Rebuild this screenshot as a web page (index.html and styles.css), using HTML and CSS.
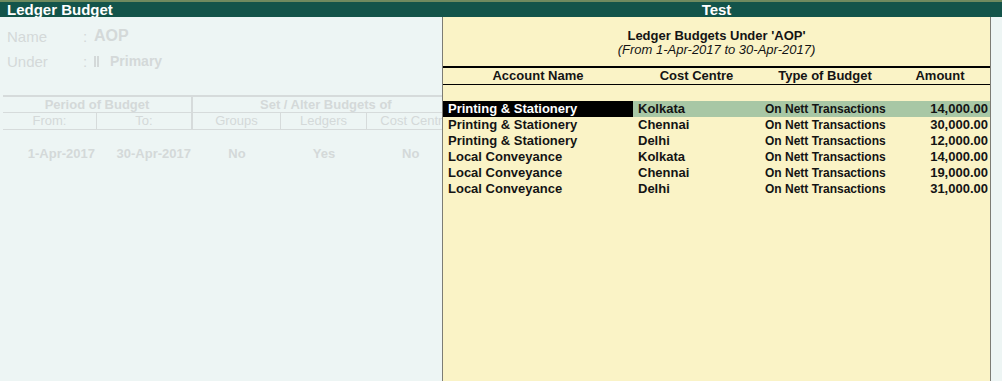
FILE: index.html
```html
<!DOCTYPE html>
<html>
<head>
<meta charset="utf-8">
<link rel="stylesheet" href="styles.css">
</head>
<body>
<div class="app">
  <div class="topstrip"></div>
  <div class="main">
    <section class="left">
      <div class="bar"><span class="bar-title">Ledger Budget</span></div>
      <div class="left-body">
        <div class="field">
          <span class="lbl">Name</span><span class="colon">:</span><span class="val big">AOP</span>
        </div>
        <div class="field second">
          <span class="lbl">Under</span><span class="colon">:</span><span class="marker"></span><span class="val">Primary</span>
        </div>
        <div class="ptable">
          <div class="cell h1 span2 thick-r">Period of Budget</div>
          <div class="cell h1 span3 shift">Set / Alter Budgets of</div>
          <div class="cell h2 thin-r">From:</div>
          <div class="cell h2 thick-r">To:</div>
          <div class="cell h2 thin-r">Groups</div>
          <div class="cell h2 thin-r">Ledgers</div>
          <div class="cell h2">Cost Centre</div>
        </div>
        <div class="pdata">
          <div class="d date">1-Apr-2017</div>
          <div class="d date">30-Apr-2017</div>
          <div class="d">No</div>
          <div class="d">Yes</div>
          <div class="d">No</div>
        </div>
      </div>
    </section>
    <section class="right">
      <div class="bar bar-center"><span class="bar-title">Test</span></div>
      <div class="right-wrap">
        <div class="report">
          <div class="r-title">Ledger Budgets Under 'AOP'</div>
          <div class="r-sub">(From 1-Apr-2017 to 30-Apr-2017)</div>
          <div class="r-thick"></div>
          <div class="r-row r-head">
            <div class="c">Account Name</div>
            <div class="c">Cost Centre</div>
            <div class="c">Type of Budget</div>
            <div class="c">Amount</div>
          </div>
          <div class="r-rows">
            <div class="r-row sel">
              <div class="acc">Printing &amp; Stationery</div>
              <div class="cc">Kolkata</div>
              <div class="tp">On Nett Transactions</div>
              <div class="amt">14,000.00</div>
            </div>
            <div class="r-row">
              <div class="acc">Printing &amp; Stationery</div>
              <div class="cc">Chennai</div>
              <div class="tp">On Nett Transactions</div>
              <div class="amt">30,000.00</div>
            </div>
            <div class="r-row">
              <div class="acc">Printing &amp; Stationery</div>
              <div class="cc">Delhi</div>
              <div class="tp">On Nett Transactions</div>
              <div class="amt">12,000.00</div>
            </div>
            <div class="r-row">
              <div class="acc">Local Conveyance</div>
              <div class="cc">Kolkata</div>
              <div class="tp">On Nett Transactions</div>
              <div class="amt">14,000.00</div>
            </div>
            <div class="r-row">
              <div class="acc">Local Conveyance</div>
              <div class="cc">Chennai</div>
              <div class="tp">On Nett Transactions</div>
              <div class="amt">19,000.00</div>
            </div>
            <div class="r-row">
              <div class="acc">Local Conveyance</div>
              <div class="cc">Delhi</div>
              <div class="tp">On Nett Transactions</div>
              <div class="amt">31,000.00</div>
            </div>
          </div>
        </div>
        <div class="edge"></div>
      </div>
    </section>
  </div>
</div>
</body>
</html>
```

FILE: styles.css
```css
* { box-sizing: border-box; }
html, body { margin: 0; padding: 0; }
body {
  width: 1002px;
  height: 381px;
  overflow: hidden;
  background: #edf5f4;
  font-family: "Liberation Sans", Arial, sans-serif;
}
.app { width: 1002px; height: 381px; display: flex; flex-direction: column; }
.topstrip {
  height: 2px;
  background: repeating-linear-gradient(to right, #6f8a5f 0 144px, #cddbc0 144px 145px);
  background-size: 144px 2px;
  background-position: 0 0;
}
.main { flex: 1; display: flex; min-height: 0; }
.bar {
  height: 15px;
  background: #13544a;
  color: #ffffff;
  font-weight: bold;
  font-size: 15px;
  line-height: 15px;
  padding-left: 7px;
  white-space: nowrap;
}
.bar-center { text-align: center; padding-left: 0; padding-right: 11px; }

/* LEFT */
.left { width: 442px; overflow: hidden; display: flex; flex-direction: column; }
.left-body { flex: 1; background: #edf5f4; padding-top: 9px; color: #d4d9d9; }
.field { display: flex; align-items: center; height: 20px; padding-left: 7px; white-space: nowrap; }
.field.second { margin-top: 5px; }
.lbl { width: 76px; font-size: 15px; }
.colon { width: 11px; font-size: 15px; }
.val { font-weight: bold; font-size: 14px; }
.val.big { font-size: 16px; }
.marker {
  display: inline-block;
  width: 5px;
  height: 11px;
  border-left: 2px solid #d4d9d9;
  border-right: 2px solid #d4d9d9;
  margin-right: 11px;
}
.ptable {
  margin-top: 24px;
  margin-left: 3px;
  width: 460px;
  display: grid;
  grid-template-columns: 94px 96px 88px 86px 96px;
  border-top: 2px solid #d6dbdb;
  white-space: nowrap;
}
.cell { border-bottom: 1px solid #d6dbdb; text-align: center; font-size: 13px; overflow: hidden; }
.h1 { font-weight: bold; height: 16px; line-height: 15px; }
.h2 { height: 17px; line-height: 16px; }
.span2 { grid-column: span 2; }
.span3 { grid-column: span 3; }
.shift { padding-right: 0; padding-left: 0; text-align: left; padding-left: 67px; }
.thick-r { border-right: 2px solid #d6dbdb; }
.thin-r { border-right: 1px solid #d6dbdb; }
.pdata {
  margin-top: 16px;
  margin-left: 3px;
  width: 460px;
  display: grid;
  grid-template-columns: 94px 96px 88px 86px 96px;
  white-space: nowrap;
}
.d { text-align: center; font-weight: bold; font-size: 13px; line-height: 16px; }
.pdata .d:nth-child(5) { text-align: left; padding-left: 35px; }
.d.date { text-align: right; padding-right: 2px; }

/* RIGHT */
.right { flex: 1; display: flex; flex-direction: column; min-width: 0; }
.right-wrap { flex: 1; display: flex; }
.report {
  width: 549px;
  background: #faf3c6;
  border-left: 1px solid #7c7c74;
  border-right: 1px solid #7c7c74;
  padding-top: 12px;
  color: #141414;
}
.edge { flex: 1; background: #edf5f4; }
.r-title { text-align: center; font-weight: bold; font-size: 13px; line-height: 14px; }
.r-sub { text-align: center; font-style: italic; font-size: 13px; line-height: 14px; }
.r-thick { margin-top: 9px; height: 2px; background: #000; }
.r-row {
  display: grid;
  grid-template-columns: 190px 127px 130px 100px;
  height: 16px;
  line-height: 16px;
  font-size: 13px;
  font-weight: bold;
  white-space: nowrap;
}
.r-head { border-bottom: 1px solid #000; height: 17px; }
.r-head .c { text-align: center; }
.r-rows { margin-top: 16px; }
.acc { padding-left: 5px; }
.cc { padding-left: 5px; }
.tp { padding-left: 5px; font-size: 12px; }
.amt { text-align: right; padding-right: 2px; }
.sel .acc { background: #000; color: #fff; }
.sel .cc, .sel .tp, .sel .amt { background: #a8c7a5; }
```
